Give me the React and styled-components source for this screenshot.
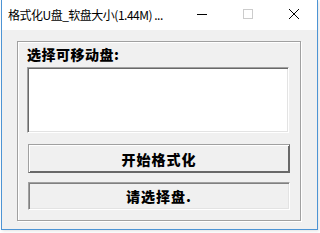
import React from "react";
import styled, { createGlobalStyle } from "styled-components";

const Global = createGlobalStyle`
  html, body { margin: 0; padding: 0; background: #ffffff; }
  #root { width: 320px; height: 233px; overflow: hidden; }
`;

const Window = styled.div`
  box-sizing: border-box;
  margin-left: 1px;
  width: 317px;
  height: 230px;
  border: 1px solid #4d94d4;
  border-top: none;
  background: #f0f0f0;
  display: flex;
  flex-direction: column;
  box-shadow: 1px 1px 3px rgba(0, 0, 0, 0.12);
`;

const TitleBar = styled.div`
  height: 30px;
  flex: none;
  background: #ffffff;
  display: flex;
  align-items: flex-start;
`;

const Title = styled.div`
  flex: 1;
  padding-left: 6px;
  line-height: 29px;
  font-family: "Noto Sans CJK SC", "Noto Sans", sans-serif;
  font-size: 12px;
  letter-spacing: -0.5px;
  color: #000;
  white-space: nowrap;
  overflow: hidden;
`;

const CaptionButton = styled.div`
  width: 46px;
  height: 27px;
  display: flex;
  align-items: center;
  justify-content: center;
`;

const Body = styled.div`
  flex: 1;
  padding: 11px 16px 8px 15px;
  display: flex;
`;

const Group = styled.div`
  flex: 1;
  box-sizing: border-box;
  border: 1px solid #a0a0a0;
  box-shadow: 1px 1px 0 #ffffff, inset 1px 1px 0 #ffffff;
  padding: 2px 10px 9px 9px;
  display: flex;
  flex-direction: column;
`;

const Label = styled.div`
  height: 23px;
  line-height: 21px;
  font-family: "Noto Sans CJK SC", sans-serif;
  font-weight: 900;
  font-size: 14px;
  color: #000;
  letter-spacing: 0.5px;
`;

const ListBox = styled.div`
  box-sizing: border-box;
  width: 262px;
  height: 66px;
  background: #ffffff;
  border: 1px solid;
  border-color: #a0a0a0 #ffffff #ffffff #a0a0a0;
  box-shadow: inset 1px 1px 0 #696969, inset -1px -1px 0 #e3e3e3;
`;

const Button = styled.div`
  box-sizing: border-box;
  margin-left: 1px;
  width: 262px;
  height: ${(p) => p.$h}px;
  margin-top: ${(p) => p.$mt}px;
  display: flex;
  align-items: center;
  justify-content: center;
  font-family: "Noto Sans CJK SC", sans-serif;
  font-weight: 900;
  font-size: 14px;
  letter-spacing: 1px;
  color: #000;
  background: #f0f0f0;
  border: 1px solid;
  border-color: ${(p) =>
    p.$sunken
      ? "#a0a0a0 #ffffff #ffffff #a0a0a0"
      : "#a0a0a0 #696969 #696969 #a0a0a0"};
  box-shadow: ${(p) =>
    p.$sunken
      ? "inset 1px 1px 0 #808080, inset -1px -1px 0 #e3e3e3"
      : "inset 1px 1px 0 #ffffff, inset -1px -1px 0 #696969"};
`;

export default function App() {
  return (
    <>
      <Global />
      <Window>
        <TitleBar>
          <Title>格式化U盘_软盘大小(1.44M) ...</Title>
          <CaptionButton>
            <svg width="10" height="10" viewBox="0 0 10 10">
              <line x1="0" y1="5.5" x2="10" y2="5.5" stroke="#000" strokeWidth="1" />
            </svg>
          </CaptionButton>
          <CaptionButton>
            <svg width="10" height="10" viewBox="0 0 10 10">
              <rect x="0.5" y="0.5" width="9" height="9" fill="none" stroke="#cccccc" strokeWidth="1" />
            </svg>
          </CaptionButton>
          <CaptionButton>
            <svg width="10" height="10" viewBox="0 0 10 10">
              <path d="M0 0 L10 10 M10 0 L0 10" stroke="#000" strokeWidth="1" />
            </svg>
          </CaptionButton>
        </TitleBar>
        <Body>
          <Group>
            <Label>选择可移动盘:</Label>
            <ListBox />
            <Button $h={29} $mt={11}>开始格式化</Button>
            <Button $h={28} $mt={9} $sunken>请选择盘.</Button>
          </Group>
        </Body>
      </Window>
    </>
  );
}
